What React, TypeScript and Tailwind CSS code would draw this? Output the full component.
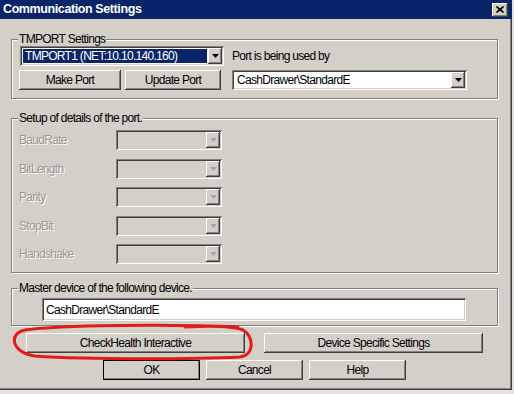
import React from "react";

const raised =
  "bg-[#d4d0c8] shadow-[inset_-1px_-1px_0_#404040,inset_1px_1px_0_#ffffff,inset_-2px_-2px_0_#808080,inset_2px_2px_0_#d4d0c8]";
const sunken =
  "shadow-[inset_1px_1px_0_#808080,inset_-1px_-1px_0_#ffffff,inset_2px_2px_0_#404040,inset_-2px_-2px_0_#d4d0c8]";

function Arrow({ disabled }: { disabled?: boolean }) {
  return (
    <svg width="7" height="4" viewBox="0 0 7 4" aria-hidden="true">
      <path d="M0 0h7L3.5 4z" fill={disabled ? "#a8a59f" : "#000"} />
    </svg>
  );
}

function Combo({
  className,
  value,
  selected,
  disabled,
}: {
  className: string;
  value?: string;
  selected?: boolean;
  disabled?: boolean;
}) {
  return (
    <div
      className={`${sunken} ${disabled ? "bg-[#d4d0c8]" : "bg-white"} flex p-[2px] ${className}`}
    >
      <div className="flex min-w-0 flex-1 p-[1px]">
        {value && (
          <span
            className={`flex flex-1 items-center whitespace-nowrap px-[2px] ${
              selected ? "bg-[#0a246a] text-white" : "text-black"
            }`}
          >
            {value}
          </span>
        )}
      </div>
      <div className={`${raised} flex w-[14px] items-center justify-center`}>
        <Arrow disabled={disabled} />
      </div>
    </div>
  );
}

function Btn({
  children,
  className,
  isDefault,
}: {
  children: React.ReactNode;
  className: string;
  isDefault?: boolean;
}) {
  return (
    <button
      className={`${raised} flex h-[20px] items-center justify-center text-black ${
        isDefault ? "outline outline-1 -outline-offset-1 outline-black" : ""
      } ${className}`}
    >
      {children}
    </button>
  );
}

function Group({
  title,
  className,
  children,
}: {
  title: string;
  className: string;
  children: React.ReactNode;
}) {
  return (
    <fieldset
      className={`ml-[11px] w-[487px] border border-[#808080] shadow-[1px_1px_0_#ffffff,inset_1px_1px_0_#ffffff] ${className}`}
    >
      <legend className="ml-[6px] bg-[#d4d0c8] px-[1px] leading-[14px] text-black">
        {title}
      </legend>
      {children}
    </fieldset>
  );
}

const disabledLabel = "text-[#9a968f] [text-shadow:1px_1px_0_#ffffff]";

export default function App() {
  const ports = ["BaudRate", "BitLength", "Parity", "StopBit", "Handshake"];

  return (
    <div className="relative h-[394px] w-[514px] overflow-hidden bg-[#e4e2de] font-['Liberation_Sans',Arial,sans-serif] text-[12px] tracking-[-0.7px]">
      <div className="flex h-[390px] w-[512px] flex-col bg-[#d4d0c8] shadow-[inset_-1px_-1px_0_#404040,inset_-2px_-2px_0_#808080]">
        <div className="flex h-[19px] items-center justify-between bg-[#0a246a] pl-[3px] pr-[4px]">
          <span className="text-[12.5px] font-bold tracking-[-0.4px] text-white">
            Communication Settings
          </span>
          <div className={`${raised} flex h-[14px] w-[16px] items-center justify-center`}>
            <svg width="8" height="7" viewBox="0 0 8 7" aria-hidden="true">
              <path d="M0.5 0.5 7.5 6.5M7.5 0.5 0.5 6.5" stroke="#000" strokeWidth="1.6" />
            </svg>
          </div>
        </div>

        <Group title="TMPORT Settings" className="mt-[13px]">
          <div className="flex items-center">
            <Combo
              className="ml-[8px] h-[20px] w-[204px]"
              value="TMPORT1 (NET:10.10.140.160)"
              selected
            />
            <span className="ml-[8px] text-black">Port is being used by</span>
          </div>
          <div className="mt-[4px] flex items-center pb-[8px]">
            <Btn className="ml-[7px] w-[102px]">Make Port</Btn>
            <Btn className="ml-[4px] w-[96px]">Update Port</Btn>
            <Combo className="ml-[11px] h-[20px] w-[235px]" value="CashDrawer\StandardE" />
          </div>
        </Group>

        <Group title="Setup of details of the port." className="mt-[12px]">
          <div className="grid grid-cols-[97px_106px] gap-y-[8.5px] pb-[8px] pl-[7px] pt-[5px]">
            {ports.map((p) => (
              <React.Fragment key={p}>
                <span className={`flex items-center ${disabledLabel}`}>{p}</span>
                <Combo className="h-[20px]" disabled />
              </React.Fragment>
            ))}
          </div>
        </Group>

        <Group title="Master device of the following device." className="mt-[8px]">
          <div className="pb-[4px] pl-[30px] pt-[3px]">
            <div
              className={`${sunken} flex h-[23px] w-[424px] items-center bg-white px-[4px] text-black`}
            >
              CashDrawer\StandardE
            </div>
          </div>
        </Group>

        <div className="mt-[7px] flex">
          <Btn className="ml-[26px] w-[219px]">CheckHealth Interactive</Btn>
          <Btn className="ml-[19px] w-[219px]">Device Specific Settings</Btn>
        </div>

        <div className="mt-[7px] flex gap-[6px] pl-[103px]">
          <Btn className="w-[97px]" isDefault>
            OK
          </Btn>
          <Btn className="w-[97px]">Cancel</Btn>
          <Btn className="w-[97px]">Help</Btn>
        </div>
      </div>

      <svg
        className="pointer-events-none absolute left-0 top-0"
        width="514"
        height="394"
        viewBox="0 0 514 394"
        aria-hidden="true"
      >
        <path
          d="M238 327 C170 324 60 325 25 330 C9 333 10 352 35 356 C90 360 200 359 240 357 C255 355 254 336 243 330 C233 326 205 326 185 327"
          fill="none"
          stroke="#e3191c"
          strokeWidth="3"
          strokeLinecap="round"
        />
      </svg>
    </div>
  );
}
